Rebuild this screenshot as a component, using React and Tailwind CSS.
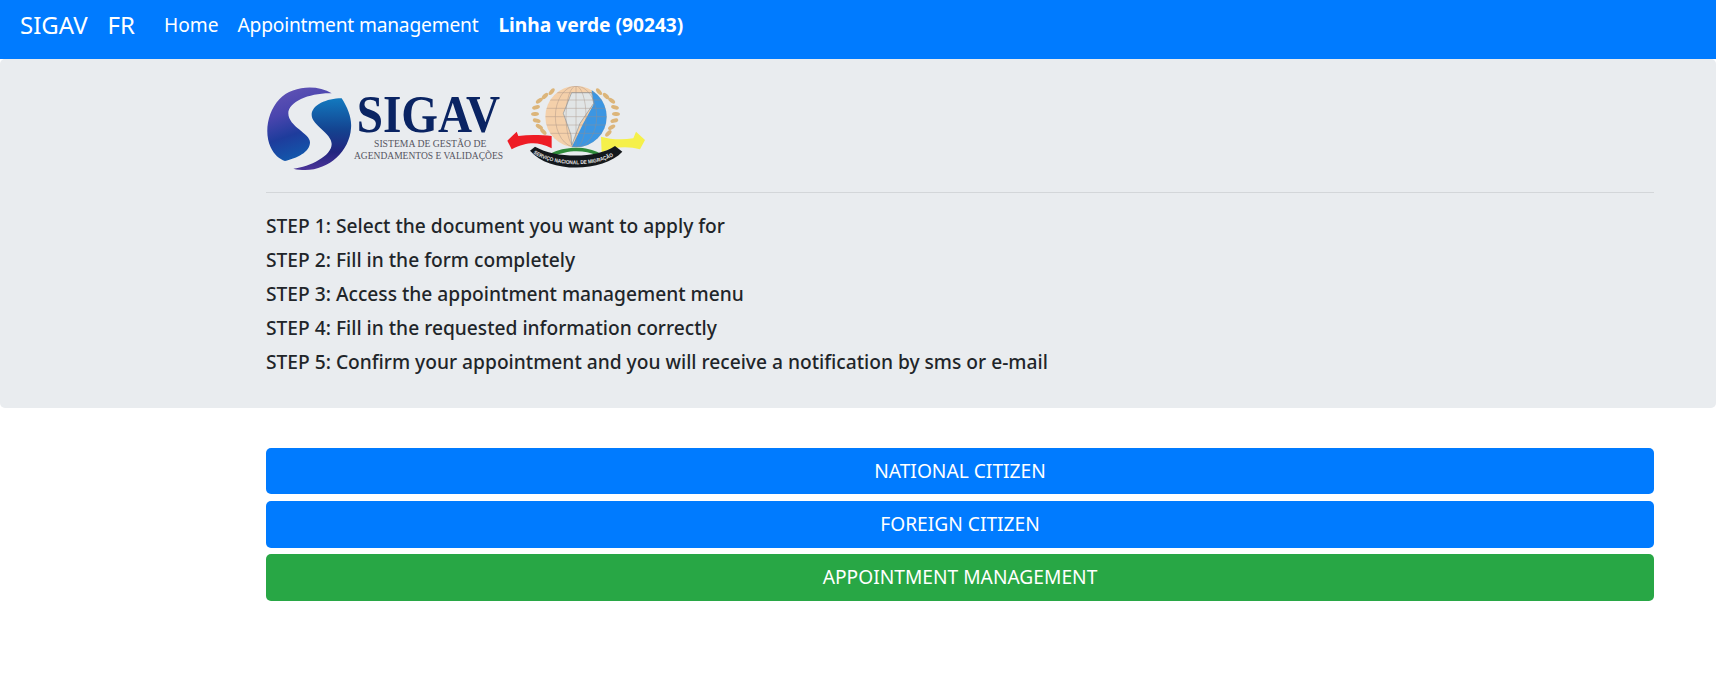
const font = { fontFamily: '"Noto Sans", "Open Sans", sans-serif' };

const leavesLeft = [
  [155, 35, -50], [135, 48, -45], [118, 62, -35], [108, 82, -15], [105, 102, -5], [110, 122, 15], [118, 140, 30], [130, 155, 45],
];
const leavesRight = [
  [297, 35, 50], [318, 48, 45], [335, 62, 35], [345, 82, 15], [348, 102, 5], [343, 122, -15], [335, 142, -30], [325, 160, -45],
];

function Logo() {
  return (
    <svg width="384" height="88" viewBox="33 42 1152 264" className="block">
      <defs>
        <linearGradient id="l1" x1="0.35" y1="0" x2="0.65" y2="1">
          <stop offset="0" stopColor="#5f52b4" />
          <stop offset="0.3" stopColor="#4a45ae" />
          <stop offset="0.6" stopColor="#1e3c9c" />
          <stop offset="1" stopColor="#0f5fb0" />
        </linearGradient>
        <linearGradient id="l2" x1="0.5" y1="0" x2="0.5" y2="1">
          <stop offset="0" stopColor="#1279bf" />
          <stop offset="0.45" stopColor="#14428f" />
          <stop offset="0.75" stopColor="#23257f" />
          <stop offset="1" stopColor="#4c3499" />
        </linearGradient>
        <clipPath id="globe">
          <circle cx="963" cy="140" r="92" />
        </clipPath>
      </defs>

      <g transform="translate(15 30)">
        <path d="M215 40C170 12 95 18 58 58C22 96 12 160 32 202C42 224 58 238 75 243C110 235 150 217 150 187C150 160 85 140 85 100C85 65 150 38 215 40Z" fill="url(#l1)" />
        <path d="M245 55C264 85 276 115 273 145C268 222 190 288 100 266C150 260 215 228 215 192C215 160 155 135 155 105C155 75 200 55 245 55Z" fill="url(#l2)" />
      </g>

      <text x="305" y="187" fontFamily="Liberation Serif" fontSize="158" fontWeight="700" fill="#0a2463" textLength="430" lengthAdjust="spacingAndGlyphs">SIGAV</text>
      <text x="357" y="232" fontFamily="Liberation Serif" fontSize="29" fill="#55555f" textLength="337" lengthAdjust="spacingAndGlyphs">SISTEMA DE GESTÃO DE</text>
      <text x="297" y="266" fontFamily="Liberation Serif" fontSize="30" fill="#55555f" textLength="447" lengthAdjust="spacingAndGlyphs">AGENDAMENTOS E VALIDAÇÕES</text>

      <g transform="translate(735 30)">
        {[...leavesLeft, ...leavesRight].map(([x, y, r]) => (
          <ellipse key={`${x}-${y}`} cx={x} cy={y} rx="12" ry="6" fill="#dcb57a" transform={`rotate(${r} ${x} ${y})`} />
        ))}
      </g>

      <circle cx="963" cy="140" r="92" fill="#f4d0aa" />
      <g clipPath="url(#globe)">
        <path d="M1010 60L1060 60L1070 230L950 232L985 160L1015 105Z" fill="#3d96e2" />
        <path d="M950 68L1010 68L1016 100L975 160L950 226L948 195L925 130Z" fill="#e1e5e6" stroke="#8a949c" strokeWidth="2" />
        <g fill="none" stroke="#a08c80" strokeWidth="1.6" opacity="0.75">
          <ellipse cx="963" cy="140" rx="30" ry="92" />
          <ellipse cx="963" cy="140" rx="62" ry="92" />
          <path d="M963 48V232M871 140H1055M873 115H1053M873 165H1053M885 90H1041M885 190H1041M905 68H1021" />
        </g>
      </g>

      <g transform="translate(735 30)">
        <path d="M22 182L50 155L55 168C90 163 125 165 155 168L155 205C135 195 115 190 100 190C80 190 60 195 35 208Z" fill="#ee1c25" />
        <path d="M303 170C330 178 365 180 400 175L408 155L435 180L420 208C395 200 365 200 340 205C325 208 315 213 305 218Z" fill="#f5f04a" />
        <path d="M150 222C190 198 260 196 300 220L288 226C255 208 195 210 160 230Z" fill="#2f8a3a" />
        <path d="M90 212L105 200C170 236 290 236 345 198L367 215C310 276 150 282 90 212Z" fill="#14181c" />
        <path id="bannerArc" d="M100 220C165 264 300 264 358 216" fill="none" />
        <text fontFamily="Liberation Sans" fontSize="16" fontWeight="700" fill="#e8e8e8">
          <textPath href="#bannerArc" textLength="250" lengthAdjust="spacingAndGlyphs">SERVIÇO NACIONAL DE MIGRAÇÃO</textPath>
        </text>
      </g>
    </svg>
  );
}

const steps = [
  "STEP 1: Select the document you want to apply for",
  "STEP 2: Fill in the form completely",
  "STEP 3: Access the appointment management menu",
  "STEP 4: Fill in the requested information correctly",
  "STEP 5: Confirm your appointment and you will receive a notification by sms or e-mail",
];

function Btn({ className, children }) {
  return (
    <button className={`block w-full h-[46.8px] rounded-[5px] text-white text-[19.2px] ${className}`}>{children}</button>
  );
}

export default function App() {
  return (
    <div style={font} className="bg-white min-h-[693px] text-[#212529]">
      <nav className="h-[59px] bg-[#007bff] flex items-center pl-5 pb-[9px] text-white">
        <span className="text-[24px] mr-5">SIGAV</span>
        <span className="text-[24px] mr-[29px]">FR</span>
        <a className="text-[19.2px] mr-[19px]">Home</a>
        <a className="text-[19.2px] mr-5 tracking-[-0.2px]">Appointment management</a>
        <a className="text-[19.2px] font-bold">Linha verde (90243)</a>
      </nav>
      <div className="h-[348.6px] bg-[#e9ecef] rounded-[5px] pt-[25px]">
        <div className="ml-[266px] mr-[62px]">
          <Logo />
          <hr className="mt-5 mb-4 border-0 border-t border-[#d3d6d9]" />
          <div className="text-[19.2px] font-medium leading-[34px]">
            {steps.map((s) => (
              <div key={s}>{s}</div>
            ))}
          </div>
        </div>
      </div>
      <div className="ml-[266px] mr-[62px] mt-10 flex flex-col gap-[6.4px]">
        <Btn className="bg-[#007bff]">NATIONAL CITIZEN</Btn>
        <Btn className="bg-[#007bff]">FOREIGN CITIZEN</Btn>
        <Btn className="bg-[#28a745]">APPOINTMENT MANAGEMENT</Btn>
      </div>
    </div>
  );
}
